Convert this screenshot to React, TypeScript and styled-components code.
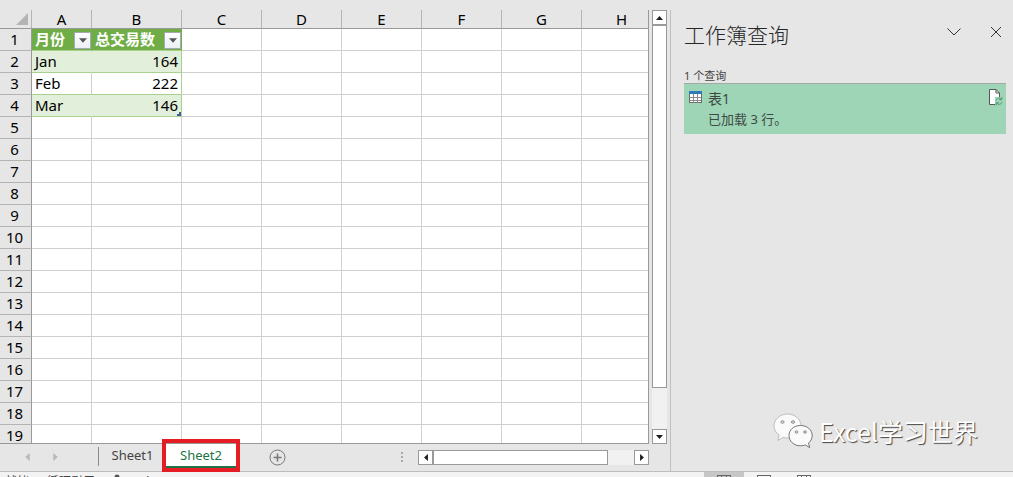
import React from 'react';
import styled, { createGlobalStyle, css } from 'styled-components';

const line = '#d0d0d0';
const edge = '#999999';
const chrome = '#e6e6e6';

const GlobalStyle = createGlobalStyle`
  *, *::before, *::after { box-sizing: border-box; }
  body {
    margin: 0;
    background: ${chrome};
    font-family: "Noto Sans", "Noto Sans CJK SC", sans-serif;
    color: #000;
  }
  button { font: inherit; color: inherit; padding: 0; border: 0; background: none; }
`;

const Window = styled.div`
  display: flex;
  flex-direction: column;
  height: 100vh;
  overflow: hidden;
`;

const Main = styled.main`
  display: flex;
  flex: 1;
  min-height: 0;
  padding-top: 10px;
`;

const Workbook = styled.section`
  display: flex;
  flex-direction: column;
  flex: 1;
  min-width: 0;
`;

const GridRow = styled.div`
  display: flex;
  flex: 1;
  min-height: 0;
  gap: 3px;
  padding-right: 3px;
`;

const Viewport = styled.div`
  flex: 1;
  min-width: 0;
  overflow: hidden;
  border-right: 1px solid ${edge};
  border-bottom: 1px solid ${edge};
`;

const Sheet = styled.table`
  width: 662px;
  table-layout: fixed;
  border-collapse: separate;
  border-spacing: 0;
  background: #fff;
  font-size: 15px;
  line-height: 21px;
`;

const Corner = styled.td`
  padding: 0 3px 3px 0;
  background: ${chrome};
  border-right: 1px solid #b4b4b4;
  border-bottom: 1px solid ${edge};
  text-align: right;
  line-height: 0;
  vertical-align: bottom;
`;

const ColumnHead = styled.th`
  height: 19px;
  padding: 0;
  background: ${chrome};
  border-right: 1px solid #b4b4b4;
  border-bottom: 1px solid ${edge};
  font-weight: 400;
  line-height: 18px;
`;

const RowHead = styled.th`
  height: 22px;
  padding: 0 2px 0 0;
  background: ${chrome};
  border-right: 1px solid ${edge};
  border-bottom: 1px solid #b4b4b4;
  font-weight: 400;
`;

type Tone = 'plain' | 'head' | 'band' | 'open';

const Cell = styled.td<{ $tone: Tone; $numeric?: boolean }>`
  height: 22px;
  padding: 0 3px;
  border-right: 1px solid ${line};
  border-bottom: 1px solid ${line};
  white-space: nowrap;
  text-align: ${(p) => (p.$numeric ? 'right' : 'left')};
  ${(p) => p.$tone !== 'plain' && css`
    border-bottom-color: #a9d08e;
    ${p.$numeric && 'border-right-color: #a9d08e;'}
  `}
  ${(p) => p.$tone === 'head' && css`
    padding-right: 0;
    background: #70ad47;
    border-right-color: #70ad47;
    color: #fff;
    font-weight: 700;
  `}
  ${(p) => p.$tone === 'band' && css`
    background: #e2efda;
    ${!p.$numeric && 'border-right-color: #e2efda;'}
  `}
`;

const HeadContent = styled.div`
  display: flex;
  align-items: center;
  justify-content: space-between;
  height: 21px;
`;

const FilterButton = styled.button`
  display: grid;
  place-items: center;
  flex: none;
  width: 17px;
  height: 17px;
  margin-top: 2px;
  border: 1px solid #a6abb3;
  background: linear-gradient(#ffffff, #eceff4);
`;

const LastCell = styled.div`
  position: relative;
`;

const ResizeMark = styled.svg`
  position: absolute;
  right: -3px;
  bottom: 0;
`;

const Scroll = styled.div<{ $vertical?: boolean }>`
  display: flex;
  flex-direction: ${(p) => (p.$vertical ? 'column' : 'row')};
  flex: none;
  background: #f1f1f1;
  ${(p) => (p.$vertical ? 'width: 15px;' : 'width: 231px; height: 15px;')}
`;

const ScrollButton = styled.button`
  display: grid;
  place-items: center;
  flex: none;
  width: 15px;
  height: 15px;
  border: 1px solid ${edge};
  background: #fff;
`;

const Thumb = styled.div<{ $grow: number }>`
  flex: ${(p) => p.$grow} 1 0;
  border: 1px solid ${edge};
  background: #fff;
`;

const Track = styled.div<{ $grow: number }>`
  flex: ${(p) => p.$grow} 1 0;
`;

const TabBar = styled.nav`
  display: flex;
  flex: none;
  height: 27px;
  padding-right: 21px;
  font-size: 13px;
`;

const TabArrows = styled.div`
  display: flex;
  align-items: center;
  justify-content: center;
  gap: 20px;
  width: 98px;
  padding: 0 16px 2px 0;
`;

const ArrowButton = styled.button`
  display: grid;
  place-items: center;
  width: 8px;
  height: 12px;
`;

const Divider = styled.div`
  width: 1px;
  height: 19px;
  margin-top: 3px;
  background: #8c8c8c;
`;

const Tab = styled.button<{ $active?: boolean }>`
  position: relative;
  width: ${(p) => (p.$active ? 70 : 67)}px;
  height: 24px;
  border-bottom: 2px solid transparent;
  color: ${(p) => (p.$active ? '#217346' : '#444')};
  ${(p) => p.$active && css`
    background: #fff;
    border-bottom-color: #217346;
  `}
`;

const Highlight = styled.span`
  position: absolute;
  inset: -5px -4px -6px;
  border: 4px solid #e51c23;
`;

const AddButton = styled.button`
  display: grid;
  place-items: center;
  width: 18px;
  height: 26px;
  margin-left: 32px;
`;

const HorizontalArea = styled.div`
  display: flex;
  align-items: center;
  gap: 14px;
  margin-left: auto;
`;

const Pane = styled.aside`
  display: flex;
  flex-direction: column;
  flex: none;
  width: 343px;
  padding: 0 7px 22px 13px;
  border-left: 1px solid #c0c0c0;
`;

const PaneHeader = styled.header`
  display: flex;
  align-items: flex-start;
  height: 58px;
  padding: 9px 2px 0 0;
`;

const PaneTitle = styled.h2`
  flex: 1;
  margin: 0;
  font-size: 21px;
  font-weight: 300;
  line-height: 32px;
  color: #262626;
`;

const PaneButton = styled.button`
  display: grid;
  place-items: center;
  width: 16px;
  height: 16px;
  margin: 5px 0 0 26px;
`;

const QueryCount = styled.p`
  margin: 0;
  height: 15px;
  font-size: 11px;
  line-height: 16px;
  color: #444;
`;

const QueryCard = styled.article`
  display: flex;
  gap: 5px;
  height: 51px;
  padding: 5px 3px 0 5px;
  border-top: 1px solid #a3aaa6;
  background: #9fd5b7;
  color: #3d4a43;
`;

const QueryIcon = styled.span`
  display: flex;
  padding-top: 2px;
`;

const QueryText = styled.div`
  flex: 1;
`;

const QueryName = styled.h3`
  margin: 0;
  font-size: 14px;
  font-weight: 400;
  line-height: 20px;
`;

const QueryStatus = styled.p`
  margin: 0;
  font-size: 13px;
  line-height: 20px;
`;

const Watermark = styled.div`
  display: flex;
  align-items: center;
  gap: 6px;
  margin: auto 0 0 89px;
  font-family: "Noto Sans CJK SC", sans-serif;
  font-size: 25px;
  line-height: 34px;
  color: #fff;
  text-shadow: 1px 1px 1px #444;
  white-space: nowrap;
`;

const StatusBar = styled.footer`
  display: flex;
  flex: none;
  align-items: flex-start;
  height: 6px;
  overflow: hidden;
  border-top: 1px solid #bdbdbd;
  background: #f3f3f3;
  font-size: 12px;
  line-height: 20px;
  color: #444;
`;

const StatusItems = styled.div`
  display: flex;
  flex: 1;
  gap: 18px;
  padding-left: 5px;
`;

const StatusItem = styled.span`
  display: flex;
  align-items: flex-start;
`;

const Views = styled.div`
  display: flex;
  width: 309px;
`;

const ViewButton = styled.button<{ $active?: boolean }>`
  display: flex;
  justify-content: center;
  width: 40px;
  height: 20px;
  padding-top: 3px;
  background: ${(p) => (p.$active ? '#c6c6c6' : 'transparent')};
`;

const triangles = {
  up: '0,5 9,5 4.5,0',
  down: '0,0 9,0 4.5,5',
  left: '5,0 5,9 0,4.5',
  right: '0,0 0,9 5,4.5',
};

function Triangle({ to, size = 9, color = '#1e1e1e' }: { to: keyof typeof triangles; size?: number; color?: string }) {
  const flat = to === 'up' || to === 'down';
  const short = Math.ceil((size * 5) / 9);
  return (
    <svg
      width={flat ? size : short}
      height={flat ? short : size}
      viewBox={flat ? '0 0 9 5' : '0 0 5 9'}
      fill={color}
      aria-hidden
    >
      <polygon points={triangles[to]} />
    </svg>
  );
}

function GridIcon() {
  return (
    <svg width="14" height="13" viewBox="0 0 14 13" aria-hidden>
      <rect x="0.5" y="0.5" width="12" height="11" fill="#fff" stroke="#6b6b6b" />
      <path d="M4.5 3v9M8.5 3v9M1 6.5h11M1 9.5h11" stroke="#8a8a8a" />
      <rect width="13" height="3" fill="#2f7ab8" />
    </svg>
  );
}

function RefreshFileIcon() {
  return (
    <svg width="15" height="17" viewBox="0 0 15 17" fill="none" aria-hidden>
      <path d="M1.500.5H8L11.500 4v12h-10z" fill="#fff" />
      <path d="M7 15.500H1.500V.5H8L11.500 4v4M8 .5V4h3.500" stroke="#555" />
      <path d="M7 8h8v9H7z" fill="#9fd5b7" />
      <path d="M8 11.500c.7-2.600 3.800-3.200 5.500-1M13.800 8v2.700h-2.700M14 13c-.8 2.600-3.800 3.200-5.500 1M8.200 16.500v-2.700h2.700" stroke="#4f9a74" />
    </svg>
  );
}

function ChatLogo() {
  return (
    <svg width="40" height="36" viewBox="0 0 40 36" fill="#fafafa" stroke="#555" strokeWidth="0.8" aria-hidden>
      <path d="M14.500 1C7 1 1 6.200 1 12.800c0 3.800 1.900 7 5.100 9.200L5 27.500l5-3.100c1.400.4 2.900.6 4.500.6C22 25 28 19.500 28 12.900S22 1 14.500 1z" stroke="#b0b0b0" />
      <path d="M27.500 12.500C20.700 12.500 16 17 16 22.500s4.700 10.300 11.500 10.300c1.800 0 3.400-.3 4.800-.9l4.400 2.700-1.200-4.500c2.300-1.900 3.700-4.600 3.700-7.600 0-5.500-4.900-10-11.700-10z" />
      <g fill="#e0e0e0" stroke="#777">
        <ellipse cx="9.500" cy="9" rx="1.600" ry="1.300" />
        <ellipse cx="20" cy="9" rx="1.600" ry="1.300" />
        <ellipse cx="23.500" cy="19" rx="1.400" ry="1.200" />
        <ellipse cx="32" cy="19" rx="1.400" ry="1.200" />
      </g>
    </svg>
  );
}

function ViewIcon({ d }: { d: string }) {
  return (
    <svg width="14" height="12" viewBox="0 0 14 12" fill="none" stroke="#666" aria-hidden>
      <rect x="0.5" y="0.5" width="13" height="11" />
      <path d={d} />
    </svg>
  );
}

const columns = ['A', 'B', 'C', 'D', 'E', 'F', 'G', 'H'];
const widths = [60, 90, 80, 80, 80, 80, 80, 80];
const headings = ['月份', '总交易数'];
const records: [string, number][] = [['Jan', 164], ['Feb', 222], ['Mar', 146]];
const rows = Array.from({ length: 19 }, (_, i) => i + 1);

function SheetCell({ row, col }: { row: number; col: number }) {
  if (col > 1 || row > records.length + 1) return <Cell $tone="plain" />;
  if (row === 1) {
    return (
      <Cell $tone="head">
        <HeadContent>
          {headings[col]}
          <FilterButton aria-label={`筛选 ${headings[col]}`}>
            <Triangle to="down" size={8} color="#555" />
          </FilterButton>
        </HeadContent>
      </Cell>
    );
  }
  const value = records[row - 2][col];
  const last = row === records.length + 1 && col === 1;
  return (
    <Cell $tone={row % 2 === 0 ? 'band' : 'open'} $numeric={col === 1}>
      {last ? (
        <LastCell>
          {value}
          <ResizeMark width="4" height="4" viewBox="0 0 4 4" fill="#44599e" aria-hidden>
            <path d="M2 0h2v4H0V2h2z" />
          </ResizeMark>
        </LastCell>
      ) : value}
    </Cell>
  );
}

export default function App() {
  return (
    <Window>
      <GlobalStyle />
      <Main>
        <Workbook>
          <GridRow>
            <Viewport>
              <Sheet>
                <colgroup>
                  <col style={{ width: 32 }} />
                  {widths.map((width, i) => <col key={columns[i]} style={{ width }} />)}
                </colgroup>
                <thead>
                  <tr>
                    <Corner>
                      <svg width="12" height="12" viewBox="0 0 12 12" fill="#b4b4b4" aria-hidden>
                        <path d="M12 0v12H0z" />
                      </svg>
                    </Corner>
                    {columns.map((name) => <ColumnHead key={name} scope="col">{name}</ColumnHead>)}
                  </tr>
                </thead>
                <tbody>
                  {rows.map((row) => (
                    <tr key={row}>
                      <RowHead scope="row">{row}</RowHead>
                      {columns.map((name, col) => <SheetCell key={name} row={row} col={col} />)}
                    </tr>
                  ))}
                </tbody>
              </Sheet>
            </Viewport>
            <Scroll $vertical>
              <ScrollButton aria-label="向上滚动"><Triangle to="up" size={7} /></ScrollButton>
              <Thumb $grow={363} />
              <Track $grow={41} />
              <ScrollButton aria-label="向下滚动"><Triangle to="down" size={7} /></ScrollButton>
            </Scroll>
          </GridRow>
          <TabBar>
            <TabArrows>
              <ArrowButton aria-label="上一个工作表"><Triangle to="left" size={8} color="#b8b8b8" /></ArrowButton>
              <ArrowButton aria-label="下一个工作表"><Triangle to="right" size={8} color="#b8b8b8" /></ArrowButton>
            </TabArrows>
            <Divider />
            <Tab>Sheet1</Tab>
            <Tab $active>
              Sheet2
              <Highlight />
            </Tab>
            <AddButton aria-label="新工作表">
              <svg width="17" height="17" viewBox="0 0 17 17" fill="none" stroke="#777" aria-hidden>
                <circle cx="8.500" cy="8.500" r="7.500" />
                <path d="M8.500 4.500v8M4.500 8.500h8" strokeWidth="1.500" />
              </svg>
            </AddButton>
            <HorizontalArea>
              <svg width="3" height="11" viewBox="0 0 3 11" fill="#aaa" aria-hidden>
                <path d="M0 0h2v2H0zM0 4h2v2H0zM0 8h2v2H0z" />
              </svg>
              <Scroll>
                <ScrollButton aria-label="向左滚动"><Triangle to="left" size={7} /></ScrollButton>
                <Thumb $grow={175} />
                <Track $grow={26} />
                <ScrollButton aria-label="向右滚动"><Triangle to="right" size={7} /></ScrollButton>
              </Scroll>
            </HorizontalArea>
          </TabBar>
        </Workbook>
        <Pane>
          <PaneHeader>
            <PaneTitle>工作簿查询</PaneTitle>
            <PaneButton aria-label="选项">
              <svg width="14" height="8" viewBox="0 0 14 8" fill="none" stroke="#333" aria-hidden>
                <path d="M.5.5 7 7 13.500.5" />
              </svg>
            </PaneButton>
            <PaneButton aria-label="关闭">
              <svg width="12" height="12" viewBox="0 0 12 12" fill="none" stroke="#333" aria-hidden>
                <path d="M1 1l10 10M11 1 1 11" />
              </svg>
            </PaneButton>
          </PaneHeader>
          <QueryCount>1 个查询</QueryCount>
          <QueryCard>
            <QueryIcon><GridIcon /></QueryIcon>
            <QueryText>
              <QueryName>表1</QueryName>
              <QueryStatus>已加载 3 行。</QueryStatus>
            </QueryText>
            <RefreshFileIcon />
          </QueryCard>
          <Watermark>
            <ChatLogo />
            Excel学习世界
          </Watermark>
        </Pane>
      </Main>
      <StatusBar>
        <StatusItems>
          <StatusItem>就绪</StatusItem>
          <StatusItem>循环引用</StatusItem>
          <StatusItem>
            <svg width="8" height="14" viewBox="0 0 8 14" fill="#555" aria-hidden>
              <circle cx="4" cy="5" r="2.500" />
              <path d="M1 8h6v5H1z" />
            </svg>
            Excel
          </StatusItem>
        </StatusItems>
        <Views>
          <ViewButton $active aria-label="普通"><ViewIcon d="M4.500 0v12M9.500 0v12M0 4.500h14M0 8.500h14" /></ViewButton>
          <ViewButton aria-label="页面布局"><ViewIcon d="M3.500 3.500h7v8" /></ViewButton>
          <ViewButton aria-label="分页预览"><ViewIcon d="M4.500 0v6M9.500 0v6M0 6.500h14" /></ViewButton>
        </Views>
      </StatusBar>
    </Window>
  );
}
